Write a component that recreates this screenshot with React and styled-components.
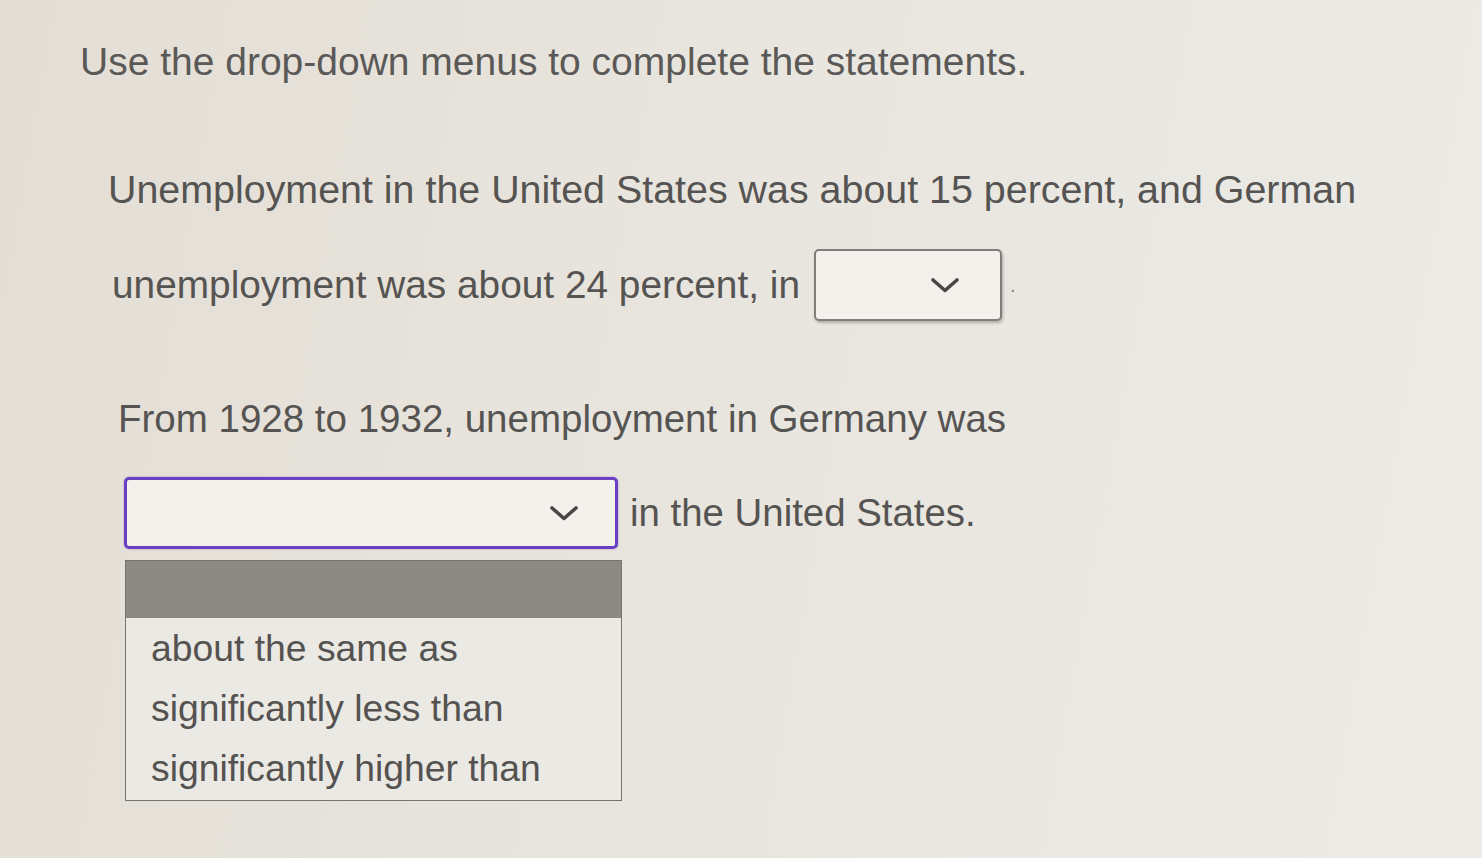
import React from "react";
import styled, { createGlobalStyle } from "styled-components";

const GlobalStyle = createGlobalStyle`
  html, body {
    margin: 0;
    padding: 0;
  }
  body {
    font-family: "Liberation Sans", Arial, sans-serif;
  }
`;

const Page = styled.div`
  width: 1482px;
  height: 858px;
  overflow: hidden;
  box-sizing: border-box;
  padding-top: 38px;
  background: linear-gradient(100deg, #e3ded5 0%, #e8e5de 45%, #ecebe6 100%);
  color: #565452;
`;

const Title = styled.h1`
  margin: 0;
  padding-left: 80px;
  font-size: 39px;
  font-weight: normal;
  line-height: 48px;
  color: #5b5957;
`;

const Statement = styled.div`
  margin-top: ${(p) => p.$top}px;
`;

const Line = styled.div`
  display: flex;
  align-items: center;
  gap: ${(p) => p.$gap || 0}px;
  height: ${(p) => p.$height}px;
  padding-left: ${(p) => p.$indent}px;
  margin-top: ${(p) => p.$top || 0}px;
  font-size: ${(p) => p.$size}px;
  white-space: nowrap;
`;

const SelectBox = styled.div`
  display: flex;
  align-items: center;
  justify-content: flex-end;
  box-sizing: border-box;
  width: ${(p) => p.$width}px;
  height: 72px;
  padding-right: ${(p) => p.$right}px;
  background: #f3f1ec;
  border: ${(p) => (p.$focused ? "3px solid #6a40c2" : "2px solid #807d7a")};
  border-radius: 5px;
  box-shadow: ${(p) =>
    p.$focused ? "0 0 2px rgba(106, 64, 194, 0.5)" : "1px 2px 3px rgba(0, 0, 0, 0.25)"};
  margin-left: ${(p) => p.$left || 0}px;
`;

const Chevron = () => (
  <svg width="30" height="20" viewBox="0 0 30 20" fill="none">
    <path d="M3 5 L15 15.5 L27 5" stroke="#4a4846" strokeWidth="3.6" strokeLinecap="round" strokeLinejoin="round" />
  </svg>
);

const Dot = styled.span`
  margin-left: 8px;
  font-size: 20px;
  color: #8a8784;
`;

const Menu = styled.ul`
  list-style: none;
  margin: 10px 0 0 125px;
  padding: 0 0 2px;
  width: 497px;
  box-sizing: border-box;
  border: 1px solid #77746f;
  background: #ebe9e3;
`;

const MenuHeader = styled.li`
  height: 57px;
  background: #8b8a84;
`;

const MenuItem = styled.li`
  height: 60px;
  line-height: 60px;
  padding-left: 25px;
  font-size: 37.3px;
  color: #555351;
`;

export default function App() {
  return (
    <>
      <GlobalStyle />
      <Page>
        <Title>Use the drop-down menus to complete the statements.</Title>

        <Statement $top={68}>
          <Line $height={70} $indent={108} $size={39.4}>
            Unemployment in the United States was about 15 percent, and German
          </Line>
          <Line $height={74} $indent={112} $top={24} $size={38.8}>
            unemployment was about 24 percent, in
            <SelectBox $width={188} $right={40} $left={14}>
              <Chevron />
            </SelectBox>
            <Dot>.</Dot>
          </Line>
        </Statement>

        <Statement $top={62}>
          <Line $height={70} $indent={118} $size={38.5}>
            From 1928 to 1932, unemployment in Germany was
          </Line>
          <Line $height={74} $indent={124} $top={22} $gap={12} $size={38.4}>
            <SelectBox $width={494} $right={36} $focused>
              <Chevron />
            </SelectBox>
            in the United States.
          </Line>
          <Menu>
            <MenuHeader />
            <MenuItem>about the same as</MenuItem>
            <MenuItem>significantly less than</MenuItem>
            <MenuItem>significantly higher than</MenuItem>
          </Menu>
        </Statement>
      </Page>
    </>
  );
}
